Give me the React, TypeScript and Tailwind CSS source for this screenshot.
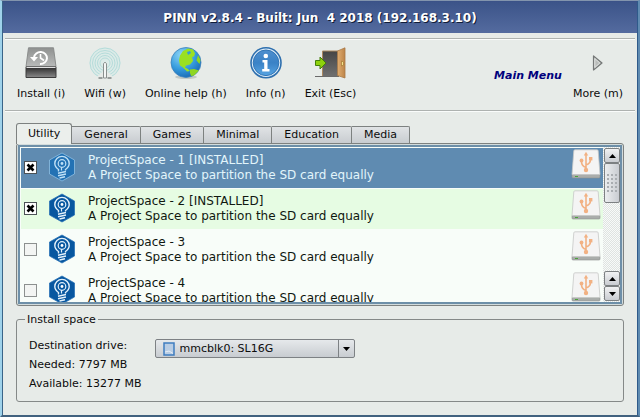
import { useState } from "react";
import type { ReactNode } from "react";

const tools: { label: string; icon: ReactNode }[] = [
  { label: "Install (i)", icon: <DriveIcon /> },
  { label: "Wifi (w)", icon: <WifiIcon /> },
  { label: "Online help (h)", icon: <GlobeIcon /> },
  { label: "Info (n)", icon: <InfoIcon /> },
  { label: "Exit (Esc)", icon: <ExitIcon /> },
];

const tabs = ["Utility", "General", "Games", "Minimal", "Education", "Media"];

const systems = [
  { name: "ProjectSpace - 1 [INSTALLED]", installed: true },
  { name: "ProjectSpace - 2 [INSTALLED]", installed: true },
  { name: "ProjectSpace - 3", installed: false },
  { name: "ProjectSpace - 4", installed: false },
];

function DriveIcon() {
  return (
    <svg viewBox="0 0 32 32" className="size-8" aria-hidden="true">
      <defs>
        <linearGradient id="driveTop" x1="0" y1="0" x2="0" y2="1">
          <stop offset="0" stopColor="#8f9190" />
          <stop offset="1" stopColor="#b9bbba" />
        </linearGradient>
        <linearGradient id="driveFront" x1="0" y1="0" x2="0" y2="1">
          <stop offset="0" stopColor="#2a2a2a" />
          <stop offset="1" stopColor="#8a8a8a" />
        </linearGradient>
      </defs>
      <path d="M3.500 .8h25l2.500 19h-30z" fill="url(#driveTop)" stroke="#8b8d8c" />
      <path d="M1 20h30v10.500H1z" fill="url(#driveFront)" stroke="#3c3c3c" />
      <path d="M1.500 20.500h29" stroke="#e2e2e2" />
      <path d="M9 10.500a6.500 6 0 1 1 6 6.500" fill="none" stroke="#fff" strokeWidth="2" />
      <path d="M5 10h8l-4 4.500z" fill="#fff" />
      <path d="M15.500 7v4l3.500 2.500" fill="none" stroke="#fff" strokeWidth="1.600" />
    </svg>
  );
}

function WifiIcon() {
  return (
    <svg viewBox="0 0 32 32" className="size-8" aria-hidden="true">
      <circle cx="16" cy="16" r="15.500" fill="#dcebe8" />
      <g fill="none" stroke="#b5dcda">
        <circle cx="16" cy="16" r="15" />
        <circle cx="16" cy="16" r="12.500" />
        <circle cx="16" cy="16" r="10" />
        <circle cx="16" cy="16" r="7.500" />
        <circle cx="16" cy="16" r="5" />
      </g>
      <path d="M6 32l7-7h6l7 7z" fill="#e7ebe8" />
      <path d="M9.500 31h4M18.500 31h4" stroke="#7f8583" strokeWidth="1.500" />
      <path d="M14.500 31V16.500q1.500-2.500 3 0V31z" fill="#f4f6f5" stroke="#8a908e" />
    </svg>
  );
}

function GlobeIcon() {
  return (
    <svg viewBox="0 0 32 32" className="size-8" aria-hidden="true">
      <defs>
        <radialGradient id="ocean" cx=".35" cy=".25" r=".85">
          <stop offset="0" stopColor="#8fd6f5" />
          <stop offset=".55" stopColor="#359bdd" />
          <stop offset="1" stopColor="#1560ad" />
        </radialGradient>
      </defs>
      <ellipse cx="16" cy="30" rx="11" ry="2" fill="#c3c9c6" />
      <circle cx="16" cy="15.500" r="15" fill="url(#ocean)" stroke="#3c82bb" strokeWidth=".8" />
      <path
        d="M13 4l5-2.500 5 1 2 4-1 3-2 .5 1 4-3 3.500-4 1-1 2 3 1.500 2 2-3 .5-4-4-3-2-1-5 1-5z"
        fill="#9ae022"
      />
      <path d="M28 8l2.500 5-1 4-3-3.500z" fill="#8fd622" />
      <path d="M20 22.500l4-.5 5 1.500-5 5-3 .5-1-3z" fill="#8fd622" />
      <path d="M17 5l3-1 1 2-3 2z" fill="#3598dc" />
    </svg>
  );
}

function InfoIcon() {
  return (
    <svg viewBox="0 0 32 32" className="size-8" aria-hidden="true">
      <defs>
        <linearGradient id="infoFill" x1="0" y1="0" x2="0" y2="1">
          <stop offset="0" stopColor="#4f8fce" />
          <stop offset=".5" stopColor="#3a82c6" />
          <stop offset="1" stopColor="#57a4e2" />
        </linearGradient>
      </defs>
      <circle cx="16" cy="15.800" r="15" fill="#dcebf7" stroke="#2e6fae" strokeWidth="1.600" />
      <circle cx="16" cy="15.800" r="12.800" fill="url(#infoFill)" stroke="#2f74b5" />
      <circle cx="15.800" cy="9" r="2.300" fill="#fff" />
      <path d="M12.500 13h5v9h2v2.500h-7.300V22h2v-6.500h-1.700z" fill="#fff" />
    </svg>
  );
}

function ExitIcon() {
  return (
    <svg viewBox="0 0 32 32" className="size-8" aria-hidden="true">
      <defs>
        <linearGradient id="doorway" x1="0" y1="0" x2="0" y2="1">
          <stop offset="0" stopColor="#454545" />
          <stop offset="1" stopColor="#6f6f6f" />
        </linearGradient>
        <linearGradient id="doorWood" x1="0" y1="0" x2="1" y2="0">
          <stop offset="0" stopColor="#e0ad70" />
          <stop offset="1" stopColor="#bd8448" />
        </linearGradient>
      </defs>
      <path d="M1 29.500h24" stroke="#6a6a6a" />
      <path d="M8.500 29V4h16v25" fill="url(#doorway)" stroke="#a9875f" />
      <path d="M23.500 4L31 .8v30.200l-7.500-2.500z" fill="url(#doorWood)" stroke="#a87a48" strokeWidth=".8" />
      <path d="M27.500 14l2 1v3l-2 1z" fill="#f5df8e" stroke="#9a7026" strokeWidth=".6" />
      <path d="M1.500 13.500h4.500V10l6 6-6 6v-3.500H1.500z" fill="#8ed10c" stroke="#437f09" />
    </svg>
  );
}

function MoreIcon() {
  return (
    <svg viewBox="0 0 32 32" className="size-8" aria-hidden="true">
      <path d="M11.500 9v14l8.500-7z" fill="#b9bcba" stroke="#757877" strokeWidth="1.200" strokeLinejoin="round" />
      <path d="M12.800 11.500v9l5-4.500z" fill="none" stroke="#dfe2e0" />
    </svg>
  );
}

function BulbIcon({ selected }: { selected: boolean }) {
  return (
    <svg viewBox="0 0 28 30" className="h-[30px] w-7 shrink-0" aria-hidden="true">
      <path
        d="M14 1l12.500 7v14L14 29 1.500 22V8z"
        fill={selected ? "#2372b4" : "#0757a0"}
        stroke={selected ? "#8fbfe2" : "#2b74b6"}
        strokeWidth=".8"
      />
      <g fill="none" stroke={selected ? "#bfe0f6" : "#e3f1fb"}>
        <path d="M10.500 19.500v-2Q6.800 15 6.800 11.600a7.200 7.200 0 0 1 14.400 0q0 3.400-3.700 5.900v1" strokeWidth="1.400" />
        <circle cx="14" cy="11.500" r="3.800" strokeWidth="1.200" />
        <path d="M13.500 15v3.500" strokeWidth="1.200" />
        <path d="M10 21.200l8-1.700M10 23.700l8-1.700M11.500 26l5.500-1.200" strokeWidth="1.400" />
      </g>
      <circle cx="14" cy="11.500" r="1.400" fill={selected ? "#bfe0f6" : "#fff"} />
    </svg>
  );
}

function UsbDriveIcon() {
  return (
    <svg viewBox="0 0 30 30" className="mt-px size-[30px] shrink-0" aria-hidden="true">
      <path d="M1 25.500h28v2.500q0 1-1 1H2q-1 0-1-1z" fill="#aaadab" stroke="#8d918f" strokeWidth=".6" />
      <path d="M4 .8h22q1 0 1.200 1L29 25.500H1L2.800 1.800q.2-1 1.200-1z" fill="#f4f4f4" stroke="#c6c8c7" strokeWidth=".8" />
      <path d="M4 27.500h3" stroke="#4aa33a" />
      <path d="M15 5v16M15 18.500q-4.500-1.500-4.500-6M15 16q4.500-1.500 4.500-5.500" fill="none" stroke="#f2b183" strokeWidth="1.600" />
      <g fill="#f2b183">
        <path d="M15 2.800l2.200 3.700h-4.400z" />
        <circle cx="15" cy="21" r="2.200" />
        <circle cx="10.500" cy="11.500" r="1.900" />
        <path d="M18 8h3.400v3.400H18z" />
      </g>
    </svg>
  );
}

function ScrollButton({ down = false }: { down?: boolean }) {
  return (
    <button
      type="button"
      aria-label={down ? "Scroll down" : "Scroll up"}
      className="grid h-[15px] w-full shrink-0 place-items-center rounded-[2px] border border-[#7c8082] bg-linear-to-b from-[#f1f2f3] to-[#c9ccd1]"
    >
      <svg viewBox="0 0 7 4" className={down ? "h-1 w-[7px] rotate-180" : "h-1 w-[7px]"} aria-hidden="true">
        <path d="M0 4L3.500 0 7 4z" />
      </svg>
    </button>
  );
}

function ToolButton({ label, icon }: { label: string; icon: ReactNode }) {
  return (
    <button type="button" className="flex flex-col items-center gap-[9px]">
      {icon}
      <span className="whitespace-nowrap leading-3">{label}</span>
    </button>
  );
}

function SystemRow({ index, selected, onSelect }: { index: number; selected: boolean; onSelect: () => void }) {
  const system = systems[index];
  const [checked, setChecked] = useState(system.installed);
  const look = selected
    ? "bg-[#5f8bb1] text-[#e2f5fb]"
    : system.installed
      ? "bg-[#e6fce3] text-[#101810]"
      : "bg-[#f8fdf9] text-[#101810]";
  return (
    <li onClick={onSelect} className={`flex h-[41px] items-start border-b border-[#f8fdf9] pl-[3px] pr-0.5 ${look}`}>
      <span className="mt-[13px] grid size-[13px] shrink-0 place-items-center">
        <input
          id={`system-${index}`}
          type="checkbox"
          checked={checked}
          onChange={(event) => setChecked(event.target.checked)}
          className={
            checked
              ? "col-start-1 row-start-1 size-[13px] appearance-none border border-[#4c5256] bg-white"
              : "col-start-1 row-start-1 size-[13px] appearance-none border border-[#8c908f] bg-[#f3f5f3]"
          }
        />
        {checked && (
          <svg viewBox="0 0 9 9" className="pointer-events-none col-start-1 row-start-1 size-[9px]" aria-hidden="true">
            <path d="M1.500 1.500l6 6M7.500 1.500l-6 6" stroke="#000" strokeWidth="2.600" />
          </svg>
        )}
      </span>
      <span className="ml-[11px] mt-1">
        <BulbIcon selected={selected} />
      </span>
      <label htmlFor={`system-${index}`} className="ml-3 mt-[5px] flex-1 whitespace-nowrap text-xs leading-[15px]">
        {system.name}
        <br />A Project Space to partition the SD card equally
      </label>
      <UsbDriveIcon />
    </li>
  );
}

export default function App() {
  const [tab, setTab] = useState(0);
  const [selected, setSelected] = useState(0);
  return (
    <div className="flex min-h-screen flex-col border-x-2 border-b-2 border-t border-b-[#41617e] border-l-[#9fd2ea] border-r-[#5f8bb1] border-t-[#8294ad] bg-[#e7ebe8] px-px font-['DejaVu_Sans',sans-serif] text-[11px] text-[#0c0c0c] shadow-[inset_1px_0_0_#3a6488,inset_-1px_0_0_#2f5a8a]">
      <header className="flex h-8 items-center justify-center border-t border-[#3b5288] bg-linear-to-b from-[#3c5489] to-[#546b9f]">
        <h1 className="whitespace-pre text-xs font-bold text-white [text-shadow:1px_1px_0_#101c38]">
          {"PINN v2.8.4 - Built: Jun  4 2018 (192.168.3.10)"}
        </h1>
      </header>

      <nav className="mx-0.5 mt-[5px] flex items-start gap-[19px] border-y border-[#aeb2b0] px-3 pb-2.5 pt-2 shadow-[0_1px_0_#fafcfb,inset_0_1px_0_#fafcfb]">
        {tools.map((tool) => (
          <ToolButton key={tool.label} {...tool} />
        ))}
        <div className="ml-auto flex items-center gap-[11px]">
          <strong className="whitespace-nowrap pt-1.5 italic text-[#00007d]">Main Menu</strong>
          <ToolButton label="More (m)" icon={<MoreIcon />} />
        </div>
      </nav>

      <main className="flex flex-1 flex-col px-[13px] pb-[13px] pt-3">
        <div role="tablist" className="flex items-end">
          {tabs.map((name, index) => (
            <button
              key={name}
              type="button"
              role="tab"
              aria-selected={tab === index}
              onClick={() => setTab(index)}
              className={
                tab === index
                  ? "relative z-10 h-[21px] rounded-t-[3px] border border-b-0 border-[#7d8180] bg-[#ebefec] px-[11px]"
                  : "h-[18px] rounded-tr-[2px] border-r border-t border-[#7d8180] bg-linear-to-b from-[#e0e3e5] to-[#c7cbcf] px-3"
              }
            >
              {name}
            </button>
          ))}
        </div>

        <section className="-mt-px h-[163px] rounded-[3px] border border-[#7d8180] bg-[#d3dcdc] p-px">
          <div className="flex h-full border-2 border-[#6d8fa8] bg-[#f8fdf9]">
            <ul className="min-w-0 flex-1 overflow-hidden pl-px pt-px">
              {systems.map((system, index) => (
                <SystemRow
                  key={system.name}
                  index={index}
                  selected={selected === index}
                  onSelect={() => setSelected(index)}
                />
              ))}
            </ul>
            <div className="flex w-[17px] flex-col bg-[repeating-conic-gradient(#dfe3e1_0_25%,#f8faf9_0_50%)] bg-size-[2px_2px] py-px pl-px">
              <ScrollButton />
              <div className="grid h-10 shrink-0 place-items-center rounded-[2px] border border-[#7c8082] bg-linear-to-r from-[#eceef0] to-[#c9ccd1]">
                <div className="h-5 w-3 bg-[radial-gradient(#a9adb1_1px,transparent_1px)] bg-size-[4px_4px]" />
              </div>
              <div className="flex-1" />
              <ScrollButton />
              <ScrollButton down />
            </div>
          </div>
        </section>

        <fieldset className="mt-[7px] flex-1 rounded-[3px] border border-[#858988] px-3 pb-2">
          <legend className="-ml-1 px-0.5 leading-[13px]">Install space</legend>
          <div className="flex items-start gap-[13px] pt-[10px]">
            <div className="leading-[19px]">
              <label htmlFor="drive">Destination drive:</label>
              <p>Needed: 7797 MB</p>
              <p>Available: 13277 MB</p>
            </div>
            <div className="mt-[3px] grid w-[200px]">
              <select
                id="drive"
                className="col-start-1 row-start-1 h-[19px] appearance-none rounded-[2px] border border-[#7d8184] bg-linear-to-b from-[#e6e9eb] to-[#c8ccd1] pl-6 pt-px"
              >
                <option>mmcblk0: SL16G</option>
              </select>
              <svg
                viewBox="0 0 12 14"
                className="pointer-events-none col-start-1 row-start-1 ml-2 h-3.5 w-3 self-center"
                aria-hidden="true"
              >
                <path d="M1 1h10v12H1z" fill="#b9cde4" stroke="#3f7dc0" strokeWidth="1.500" />
                <path d="M2 10l4-1 4 2.500" fill="none" stroke="#e8eef4" />
              </svg>
              <span className="pointer-events-none col-start-1 row-start-1 grid w-[17px] place-items-center justify-self-end border-l border-[#7d8184]">
                <svg viewBox="0 0 7 4" className="h-1 w-[7px]" aria-hidden="true">
                  <path d="M0 0h7L3.500 4z" />
                </svg>
              </span>
            </div>
          </div>
        </fieldset>
      </main>
    </div>
  );
}
